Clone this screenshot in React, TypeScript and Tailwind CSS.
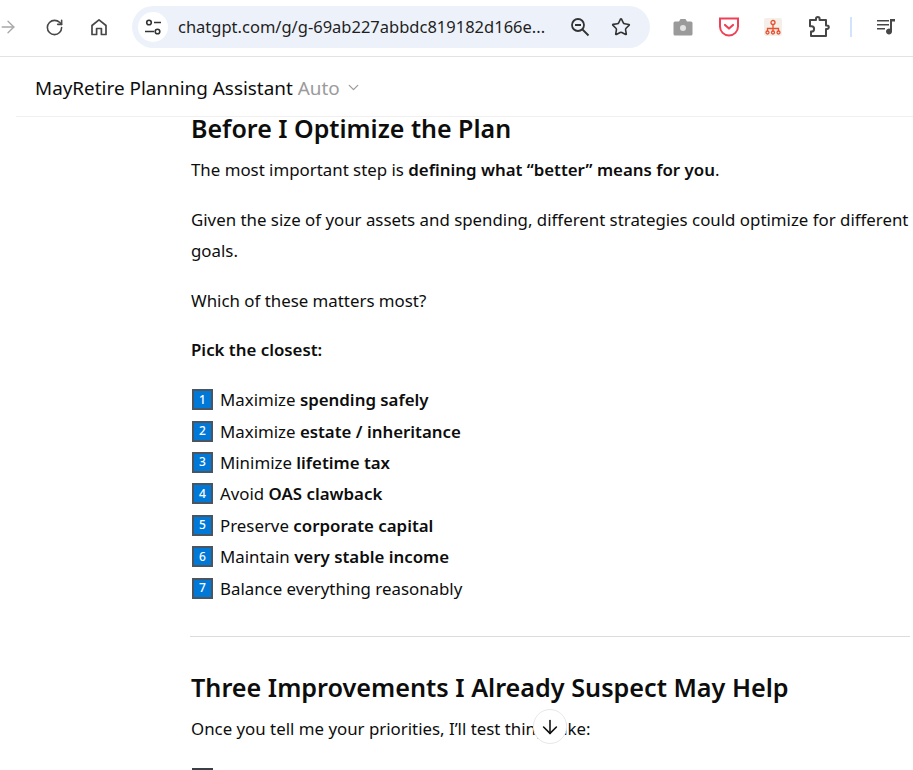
import React from 'react';
import { ArrowDown, ArrowRight, ChevronDown, RotateCw, Star } from 'lucide-react';

const font = 'font-["Noto_Sans","Open_Sans",sans-serif]';

const items: [string, string, string][] = [
  ['1', 'Maximize ', 'spending safely'],
  ['2', 'Maximize ', 'estate / inheritance'],
  ['3', 'Minimize ', 'lifetime tax'],
  ['4', 'Avoid ', 'OAS clawback'],
  ['5', 'Preserve ', 'corporate capital'],
  ['6', 'Maintain ', 'very stable income'],
];

const NumBox: React.FC<{ n: string }> = ({ n }) => (
  <span className="w-[21px] h-[21px] shrink-0 flex items-center justify-center bg-[#0078d7] border-2 border-[#4a5560] text-white text-[12px] font-medium leading-none ml-[1px] mr-[7px]">{n}</span>
);

const HomeIcon = () => (
  <svg width="20" height="20" viewBox="0 0 20 20" fill="none" stroke="#474747" strokeWidth="1.7" strokeLinejoin="round">
    <path d="M3 8.5 10 2.8l7 5.7V17.5h-4.6v-6H7.6v6H3z" />
  </svg>
);

const TuneIcon = () => (
  <svg width="20" height="20" viewBox="0 0 20 20" fill="none" stroke="#333" strokeWidth="1.6">
    <circle cx="6" cy="5.5" r="2.3" />
    <path d="M11 5.5h7M2 14.5h9" />
    <circle cx="14.5" cy="14.5" r="2.3" />
  </svg>
);

const ZoomOutIcon = () => (
  <svg width="20" height="20" viewBox="0 0 20 20" fill="none" stroke="#333" strokeWidth="1.8">
    <circle cx="8" cy="8" r="6" />
    <path d="M5 8h6M12.5 12.5l6 6" />
  </svg>
);

const CameraIcon = () => (
  <svg width="20" height="18" viewBox="0 0 20 18">
    <path fill="#9a9a9a" d="M2 3.5h4L7.5 1h5L14 3.5h4a1.5 1.5 0 0 1 1.5 1.5v11a1.5 1.5 0 0 1-1.5 1.5H2A1.5 1.5 0 0 1 .5 16V5A1.5 1.5 0 0 1 2 3.5z" />
    <circle cx="10" cy="10" r="3" fill="#e2e2e2" />
  </svg>
);

const PocketIcon = () => (
  <svg width="22" height="20" viewBox="0 0 22 20" fill="none" stroke="#ef4056" strokeWidth="2">
    <path d="M2 1.5h18v8a9 9 0 0 1-18 0z" />
    <path d="M7 8l4 3.5L15 8" strokeLinecap="round" strokeLinejoin="round" strokeWidth="2.2" />
  </svg>
);

const SitemapIcon = () => (
  <svg width="18" height="18" viewBox="0 0 18 18">
    <rect width="18" height="18" rx="2" fill="#f4efe9" />
    <g fill="none" stroke="#e8502f" strokeWidth="1.3">
      <circle cx="9" cy="4.5" r="2" />
      <path d="M9 6.5v4M3.5 13v-2.5h11V13M9 10.5V13" />
      <circle cx="3.5" cy="14.5" r="1.5" />
      <circle cx="9" cy="14.5" r="1.5" />
      <circle cx="14.5" cy="14.5" r="1.5" />
    </g>
  </svg>
);

const PuzzleIcon = () => (
  <svg width="22" height="22" viewBox="0 0 22 22" fill="none" stroke="#474747" strokeWidth="2" strokeLinejoin="round">
    <path d="M2 4h6V2.8a1.8 1.8 0 0 1 3.6 0V4H18v5.5h1a1.8 1.8 0 0 1 0 3.6h-1V20H3v-4.5h.5a2.6 2.6 0 0 0 0-5.2H2z" />
  </svg>
);

const MusicQueueIcon = () => (
  <svg width="20" height="18" viewBox="0 0 20 18" fill="#474747">
    <path d="M1 2h12v1.6H1zM1 6h12v1.6H1zM1 10h8v1.6H1z" />
    <path d="M14 1h5v2.4h-3v10.1a3 3 0 1 1-2-2.8z" />
  </svg>
);

export default function App() {
  return (
    <div className={`${font} relative h-[770px] overflow-hidden bg-white text-[#0d0d0d]`}>
      <div className="h-[57px] border-b border-[#e3e3e3] flex items-center pb-[2px]">
        <ArrowRight className="w-5 h-5 text-[#a8a8a8] -ml-[2px] mr-[27px]" strokeWidth={1.6} />
        <RotateCw className="w-[19px] h-[19px] text-[#474747] mr-[25px]" strokeWidth={2} />
        <HomeIcon />
        <div className="ml-[23px] w-[518px] h-[42px] rounded-full bg-[#edf2fa] flex items-center pl-[6px] pr-[19px]">
          <span className="w-[30px] h-[30px] rounded-full bg-white flex items-center justify-center"><TuneIcon /></span>
          <span className="ml-[10px] pt-[1px] text-[#1f1f1f] text-[16.5px] whitespace-nowrap w-[385px] overflow-hidden">chatgpt.com/g/g-69ab227abbdc819182d166e...</span>
          <span className="ml-auto mr-[21px]"><ZoomOutIcon /></span>
          <Star className="w-5 h-5 text-[#333]" strokeWidth={1.9} />
        </div>
        <span className="ml-[23px] flex items-center"><CameraIcon /></span>
        <span className="ml-[25px] flex items-center"><PocketIcon /></span>
        <span className="ml-[24px] flex items-center"><SitemapIcon /></span>
        <span className="ml-[26px] flex items-center"><PuzzleIcon /></span>
        <span className="ml-[20px] w-[2px] h-[20px] bg-[#d3e3fd]" />
        <span className="ml-[24px] flex items-center"><MusicQueueIcon /></span>
      </div>

      <div className="ml-[16px] h-[60px] border-b border-[#f0f0f0] flex items-center pl-[19px] pt-[3px] text-[18.9px]">
        <span>MayRetire Planning Assistant</span>
        <span className="text-[#9b9b9b] ml-[5px]">Auto</span>
        <ChevronDown className="w-[17px] h-[17px] text-[#9b9b9b] ml-[5px] -mt-[2px]" strokeWidth={1.8} />
      </div>

      <div className="ml-[190px] w-[720px] pl-[1px] text-[16.85px] leading-[31px]">
        <h2 className="text-[25px] font-semibold leading-[26px] -mt-[2px]">Before I Optimize the Plan</h2>
        <p className="mt-[13px]">The most important step is <strong className="font-semibold">defining what “better” means for you</strong>.</p>
        <p className="mt-[19px]">Given the size of your assets and spending, different strategies could optimize for different goals.</p>
        <p className="mt-[19px]">Which of these matters most?</p>
        <p className="mt-[18px] font-semibold">Pick the closest:</p>
        <ul className="mt-[19px]">
          {items.map(([n, a, b]) => (
            <li key={n} className="flex items-center h-[31.4px]">
              <NumBox n={n} />
              <span>{a}<strong className="font-semibold">{b}</strong></span>
            </li>
          ))}
          <li className="flex items-center h-[31.4px]"><NumBox n="7" /><span>Balance everything reasonably</span></li>
        </ul>
        <hr className="mt-[32px] -ml-[1px] border-[#dcdcdc]" />
        <h2 className="text-[25.2px] font-semibold leading-[32px] mt-[34px]">Three Improvements I Already Suspect May Help</h2>
        <p className="mt-[10px]">Once you tell me your priorities, I’ll test things like:</p>
        <div className="mt-[24px] ml-[1px] w-[21px] h-[21px] bg-[#3a4048]" />
      </div>

      <div className="absolute left-[533px] top-[709px] w-[34px] h-[35px] rounded-full bg-white border border-[#e8e8e8] flex items-center justify-center">
        <ArrowDown className="w-[22px] h-[22px] text-[#0d0d0d]" strokeWidth={1.7} />
      </div>
    </div>
  );
}
